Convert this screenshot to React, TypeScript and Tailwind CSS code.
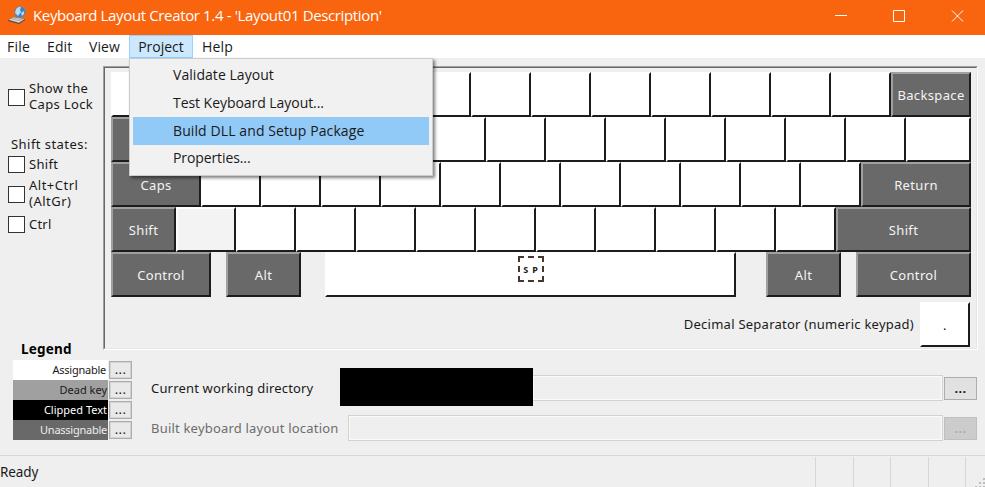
import React from "react";

type Tone = "white" | "gray" | "blank";

const toneClass: Record<Tone, string> = {
  white: "bg-white border-l-white border-t-white",
  gray: "bg-[#696969] text-[#f4f4f4] border-l-[#a0a0a0] border-t-[#a0a0a0]",
  blank: "bg-[#f3f3f3] border-l-white border-t-white",
};

function Key({ w = "w-[60px]", tone = "white", children }: { w?: string; tone?: Tone; children?: React.ReactNode }) {
  return (
    <div className={`${w} ${toneClass[tone]} flex h-[45px] shrink-0 items-center justify-center border-2 border-r-[#1c1c1c] border-b-[#1c1c1c] pt-[2px] text-[13px] tracking-[0.35px] whitespace-nowrap`}>
      {children}
    </div>
  );
}

function Keys({ count }: { count: number }) {
  return <>{Array.from({ length: count }, (_, i) => <Key key={i} />)}</>;
}

function Check({ lines, h, cls = "" }: { lines: string[]; h: string; cls?: string }) {
  return (
    <div className={`${h} flex items-center gap-[4px]`}>
      <span className="h-[17px] w-[17px] shrink-0 border-[1.5px] border-[#333] bg-white" />
      <span className={`${cls} flex flex-col text-[13px] leading-[16px] whitespace-nowrap`}>
        {lines.map((line) => <span key={line}>{line}</span>)}
      </span>
    </div>
  );
}

function LegendRow({ label, cls }: { label: string; cls: string }) {
  return (
    <div className="flex h-5 items-center">
      <div className={`${cls} h-5 w-[95px] text-right text-[11px] leading-[20px] whitespace-nowrap`}>{label}</div>
      <div className="ml-[1px] flex h-[18px] w-[23px] items-center justify-center border border-[#adadad] bg-[#e9e9e9] pb-[1px] outline outline-1 -outline-offset-2 outline-[#d4d4d4]">
        <Dots cls="font-normal text-[#222]" />
      </div>
    </div>
  );
}

function Dots({ cls = "font-bold text-[#222]" }: { cls?: string }) {
  return <span className={`${cls} text-[13px] leading-none tracking-[0.3px]`}>...</span>;
}

function AppIcon() {
  return (
    <svg width="20" height="20" viewBox="0 0 20 20">
      <path d="M8 11 14 13 13 17 8 16Z" fill="#777" />
      <circle cx="12.8" cy="6.8" r="5.4" fill="#3b82cc" />
      <path d="M9 4q3-3 5-2l-1 3 1 2-3 4-3-3ZM14 8l3-2v3l-2 2Z" fill="#b5dcf3" />
      <path d="M17 2q3 5-1 10l-5 2" fill="none" stroke="#85858f" strokeWidth="1.2" />
      <path d="m1 15 6-3 11 2-6 4Z" fill="#dddcd8" stroke="#8b7668" strokeWidth=".6" />
      <path d="m1 15 11 3v1L1 16Zm11 3 6-4v1l-6 4Z" fill="#4d4743" />
      <path d="m4 14 10 2M6 13l10 2" stroke="#999" strokeWidth=".7" />
    </svg>
  );
}

const menuItems = [
  { label: "Validate Layout", cls: "h-[28px] leading-[28px] tracking-[0.05px]" },
  { label: "Test Keyboard Layout...", cls: "h-[28px] leading-[28px] tracking-[-0.05px]" },
  { label: "Build DLL and Setup Package", cls: "h-[28px] leading-[28px] tracking-[0.1px] bg-[#91c9f7]" },
  { label: "Properties...", cls: "h-[28px] leading-[26px] tracking-[-0.1px]" },
];

export default function App() {
  return (
    <div className="relative flex h-[487px] w-[985px] flex-col overflow-hidden bg-[#efefef] text-[#1a1a1a] [font-family:'Noto_Sans','Open_Sans',sans-serif]">
      <header className="flex h-[35px] shrink-0 items-center bg-[#f8650e] text-white">
        <div className="ml-[7px] -mt-[5px]"><AppIcon /></div>
        <span className="ml-[6px] -mt-[4px] text-[15px] tracking-[-0.36px] whitespace-nowrap [font-family:'Open_Sans']">Keyboard Layout Creator 1.4 - 'Layout01 Description'</span>
        <svg className="ml-auto" width="150" height="35" fill="none" stroke="white" strokeWidth="1">
          <path d="M0 15.5h12M58.5 10.5h11v11h-11ZM117 10.5l11 11m0-11-11 11" />
        </svg>
      </header>

      <nav className="flex h-[23px] shrink-0 bg-white text-[14px] leading-[23px] [font-family:'Open_Sans']">
        <span className="w-[47px] pl-[7px] tracking-[0.2px]">File</span>
        <span className="w-[42px] tracking-[0.1px]">Edit</span>
        <span className="w-[40px] tracking-[0.1px]">View</span>
        <span className="w-[64px] border border-[#99d1ff] bg-[#cce8ff] text-center leading-[21px]">Project</span>
        <span className="pl-[9px] tracking-[0.2px]">Help</span>
      </nav>

      <main className="flex h-[292px] shrink-0">
        <aside className="w-[103px] shrink-0 pl-[8px]">
          <div className="pt-[22px]"><Check h="h-[34px]" cls="-mt-[3px] tracking-[0.35px]" lines={["Show the", "Caps Lock"]} /></div>
          <div className="mt-[20px] ml-[3px] h-[20px] text-[13px] leading-[20px] tracking-[0.45px] whitespace-nowrap">Shift states:</div>
          <Check h="h-[20px]" cls="tracking-[0.3px]" lines={["Shift"]} />
          <Check h="h-[40px]" cls="-mt-[2px] tracking-[0.5px]" lines={["Alt+Ctrl", "(AltGr)"]} />
          <Check h="h-[20px]" cls="tracking-[0.2px]" lines={["Ctrl"]} />
        </aside>
        <section className="mt-[8px] h-[284px] w-[875px] border border-t-[#a0a0a0] border-r-white border-b-white border-l-[#a0a0a0]">
          <div className="h-full border border-t-[#696969] border-r-[#e6e6e6] border-b-[#e6e6e6] border-l-[#696969] pt-[4px] pl-[6px]">
            <div className="flex"><Keys count={13} /><Key w="w-[80px]" tone="gray">Backspace</Key></div>
            <div className="flex"><Key w="w-[75px]" tone="gray">Tab</Key><Keys count={12} /><Key w="w-[65px]" /></div>
            <div className="flex"><Key w="w-[90px]" tone="gray">Caps</Key><Keys count={11} /><Key w="w-[110px]" tone="gray">Return</Key></div>
            <div className="flex"><Key w="w-[65px]" tone="gray">Shift</Key><Key tone="blank" /><Keys count={10} /><Key w="w-[135px]" tone="gray">Shift</Key></div>
            <div className="flex">
              <Key w="w-[100px]" tone="gray">Control</Key>
              <div className="w-[15px]" />
              <Key w="w-[75px]" tone="gray">Alt</Key>
              <div className="w-[24px]" />
              <Key w="w-[411px]">
                <span className="mb-[13px] flex h-[26px] w-[26px] items-center justify-center gap-[4px] border-2 border-dashed border-[#443630] text-[9px] leading-none font-bold tracking-normal"><span>S</span><span>P</span></span>
              </Key>
              <div className="w-[30px]" />
              <Key w="w-[75px]" tone="gray">Alt</Key>
              <div className="w-[15px]" />
              <Key w="w-[115px]" tone="gray">Control</Key>
            </div>
            <div className="mt-[5px] mr-[6px] flex items-center justify-end gap-[6px] text-[13px] tracking-[0.25px]">
              <span>Decimal Separator (numeric keypad)</span>
              <Key w="w-[50px]">.</Key>
            </div>
          </div>
        </section>
      </main>

      <section className="flex h-[105px] shrink-0">
        <div className="w-[151px] shrink-0 pl-[13px]">
          <div className="-mt-[10px] h-[20px] pl-[8px] text-[13.5px] leading-[18px] font-bold tracking-[0.2px] text-black">Legend</div>
          <LegendRow label="Assignable" cls="bg-white pr-[2px] tracking-[-0.25px]" />
          <LegendRow label="Dead key" cls="bg-[#a0a0a0] pr-[1px]" />
          <LegendRow label="Clipped Text" cls="bg-black pr-[1px] text-white" />
          <LegendRow label="Unassignable" cls="bg-[#696969] pr-[1px] tracking-[-0.25px] text-[#eee]" />
        </div>
        <div className="pt-[18px]">
          <div className="flex h-[40px] items-center">
            <span className="w-[189px] pt-[2px] text-[13px] tracking-[0.18px]">Current working directory</span>
            <div className="mb-[2px] h-[38px] w-[193px] bg-black" />
            <div className="h-[26px] w-[410px] border border-l-0 border-[#d2d2d2] shadow-[inset_0_0_0_1px_#fafafa]" />
            <div className="ml-[1px] flex h-[23px] w-[33px] items-center justify-center border-[1.5px] border-[#adadad] bg-[#e1e1e1]"><Dots /></div>
          </div>
          <div className="flex h-[40px] items-center">
            <span className="w-[197px] pt-[2px] text-[13px] tracking-[0.2px] text-[#6d6d6d]">Built keyboard layout location</span>
            <div className="h-[26px] w-[595px] border border-[#d2d2d2] shadow-[inset_0_0_0_1px_#fafafa]" />
            <div className="ml-[1px] flex h-[23px] w-[33px] items-center justify-center border border-[#bfbfbf] bg-[#cccccc]"><Dots cls="font-bold text-[#a8adb0]" /></div>
          </div>
        </div>
      </section>

      <footer className="flex h-[33px] shrink-0 border-t border-[#d7d7d7]">
        <span className="w-[815px] text-[13.5px] leading-[33px] tracking-[-0.1px]">Ready</span>
        {[0, 1, 2, 3].map((n) => <span key={n} className="mt-[1px] w-[37.5px] border-l border-[#d7d7d7]" />)}
        <span className="mt-[1px] flex flex-1 items-end justify-end border-l border-[#d7d7d7]">
          <svg width="11" height="11" fill="#bdbdbd"><path d="M9 1h2v2h-2ZM5 5h2v2h-2ZM9 5h2v2h-2ZM1 9h2v2h-2ZM5 9h2v2h-2ZM9 9h2v2h-2Z" /></svg>
        </span>
      </footer>

      <div className="absolute top-[58px] left-[129px] h-[118px] w-[304px] border border-[#cccccc] bg-[#f1f1f1] px-[3px] py-[2px] text-[14px] shadow-[2px_2px_3px_rgba(0,0,0,0.5)] [font-family:'Open_Sans']">
        {menuItems.map(({ label, cls }) => (
          <div key={label} className={`${cls} pl-[40px]`}>{label}</div>
        ))}
      </div>
    </div>
  );
}
